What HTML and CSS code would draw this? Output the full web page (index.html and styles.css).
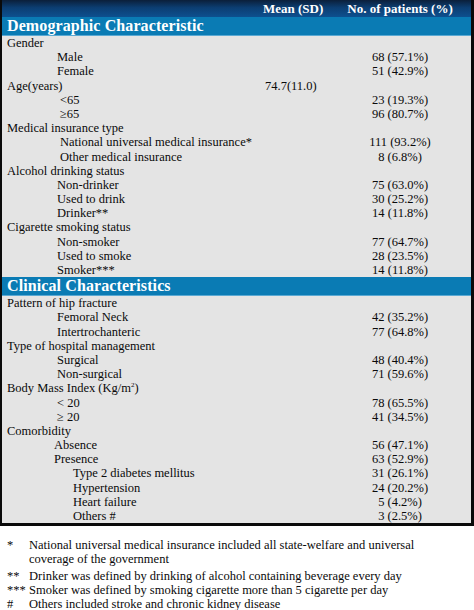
FILE: index.html
```html
<!DOCTYPE html>
<html>
<head>
<meta charset="utf-8">
<link rel="stylesheet" href="styles.css">
</head>
<body>
<div class="table">
  <div class="head">
    <div class="c-label"></div>
    <div class="c-mean">Mean (SD)</div>
    <div class="c-num">No. of patients (%)</div>
  </div>
  <div class="band">Demographic Characteristic</div>
  <div class="body">
    <div class="row"><div class="c-label">Gender</div><div class="c-mean"></div><div class="c-num"></div></div>
    <div class="row"><div class="c-label i1">Male</div><div class="c-mean"></div><div class="c-num">68 (57.1%)</div></div>
    <div class="row"><div class="c-label i1">Female</div><div class="c-mean"></div><div class="c-num">51 (42.9%)</div></div>
    <div class="row"><div class="c-label">Age(years)</div><div class="c-mean">74.7(11.0)</div><div class="c-num"></div></div>
    <div class="row"><div class="c-label i1b">&lt;65</div><div class="c-mean"></div><div class="c-num">23 (19.3%)</div></div>
    <div class="row"><div class="c-label i1b">&ge;65</div><div class="c-mean"></div><div class="c-num">96 (80.7%)</div></div>
    <div class="row"><div class="c-label">Medical insurance type</div><div class="c-mean"></div><div class="c-num"></div></div>
    <div class="row"><div class="c-label i1b">National universal medical insurance*</div><div class="c-mean"></div><div class="c-num">111 (93.2%)</div></div>
    <div class="row"><div class="c-label i1b">Other medical insurance</div><div class="c-mean"></div><div class="c-num">8 (6.8%)</div></div>
    <div class="row"><div class="c-label">Alcohol drinking status</div><div class="c-mean"></div><div class="c-num"></div></div>
    <div class="row"><div class="c-label i1">Non-drinker</div><div class="c-mean"></div><div class="c-num">75 (63.0%)</div></div>
    <div class="row"><div class="c-label i1">Used to drink</div><div class="c-mean"></div><div class="c-num">30 (25.2%)</div></div>
    <div class="row"><div class="c-label i1">Drinker**</div><div class="c-mean"></div><div class="c-num">14 (11.8%)</div></div>
    <div class="row"><div class="c-label">Cigarette smoking status</div><div class="c-mean"></div><div class="c-num"></div></div>
    <div class="row"><div class="c-label i1">Non-smoker</div><div class="c-mean"></div><div class="c-num">77 (64.7%)</div></div>
    <div class="row"><div class="c-label i1">Used to smoke</div><div class="c-mean"></div><div class="c-num">28 (23.5%)</div></div>
    <div class="row"><div class="c-label i1">Smoker***</div><div class="c-mean"></div><div class="c-num">14 (11.8%)</div></div>
  </div>
  <div class="band">Clinical Characteristics</div>
  <div class="body">
    <div class="row"><div class="c-label">Pattern of hip fracture</div><div class="c-mean"></div><div class="c-num"></div></div>
    <div class="row"><div class="c-label i1">Femoral Neck</div><div class="c-mean"></div><div class="c-num">42 (35.2%)</div></div>
    <div class="row"><div class="c-label i1">Intertrochanteric</div><div class="c-mean"></div><div class="c-num">77 (64.8%)</div></div>
    <div class="row"><div class="c-label">Type of hospital management</div><div class="c-mean"></div><div class="c-num"></div></div>
    <div class="row"><div class="c-label i1">Surgical</div><div class="c-mean"></div><div class="c-num">48 (40.4%)</div></div>
    <div class="row"><div class="c-label i1">Non-surgical</div><div class="c-mean"></div><div class="c-num">71 (59.6%)</div></div>
    <div class="row"><div class="c-label">Body Mass Index (Kg/m<sup>2</sup>)</div><div class="c-mean"></div><div class="c-num"></div></div>
    <div class="row"><div class="c-label i1">&lt; 20</div><div class="c-mean"></div><div class="c-num">78 (65.5%)</div></div>
    <div class="row"><div class="c-label i1">&ge; 20</div><div class="c-mean"></div><div class="c-num">41 (34.5%)</div></div>
    <div class="row"><div class="c-label">Comorbidity</div><div class="c-mean"></div><div class="c-num"></div></div>
    <div class="row"><div class="c-label i1a">Absence</div><div class="c-mean"></div><div class="c-num">56 (47.1%)</div></div>
    <div class="row"><div class="c-label i1a">Presence</div><div class="c-mean"></div><div class="c-num">63 (52.9%)</div></div>
    <div class="row"><div class="c-label i2">Type 2 diabetes mellitus</div><div class="c-mean"></div><div class="c-num">31 (26.1%)</div></div>
    <div class="row"><div class="c-label i2">Hypertension</div><div class="c-mean"></div><div class="c-num">24 (20.2%)</div></div>
    <div class="row"><div class="c-label i2">Heart failure</div><div class="c-mean"></div><div class="c-num">5 (4.2%)</div></div>
    <div class="row"><div class="c-label i2">Others #</div><div class="c-mean"></div><div class="c-num">3 (2.5%)</div></div>
  </div>
</div>
<div class="notes">
  <div class="note first"><span class="mark">*</span><span class="txt">National universal medical insurance included all state-welfare and universal coverage of the government</span></div>
  <div class="note"><span class="mark">**</span><span class="txt">Drinker was defined by drinking of alcohol containing beverage every day</span></div>
  <div class="note"><span class="mark">***</span><span class="txt">Smoker was defined by smoking cigarette more than 5 cigarette per day</span></div>
  <div class="note"><span class="mark">#</span><span class="txt">Others included stroke and chronic kidney disease</span></div>
</div>
</body>
</html>
```
FILE: styles.css
```css
html, body {
  margin: 0;
  padding: 0;
  background: #ffffff;
}
body {
  width: 474px;
  font-family: "Liberation Serif", "Times New Roman", serif;
  color: #0a0a0a;
}
.table {
  border-left: 2px solid #0a0a0a;
  border-right: 3px solid #0a0a0a;
  border-bottom: 3px solid #0a0a0a;
  background: #e4e4e4;
}
.head, .row {
  display: grid;
  grid-template-columns: 257px 70px 142px;
}
.head {
  height: 17px;
  line-height: 17px;
  background: linear-gradient(#0b1f3a 0%, #0c3e72 45%, #0d508f 100%);
  color: #ffffff;
  font-weight: bold;
  font-size: 13px;
}
.head .c-mean {
  text-align: left;
  padding-left: 4px;
}
.head .c-num {
  text-align: center;
}
.band {
  height: 18px;
  line-height: 18px;
  background: #0a7bb4;
  border-bottom: 1px solid #5aa9d3;
  color: #ffffff;
  font-weight: bold;
  font-size: 16px;
  padding-left: 5px;
  letter-spacing: 0.1px;
}
.row {
  height: 14.2px;
  line-height: 14.2px;
  font-size: 12.5px;
  white-space: nowrap;
}
.c-label {
  padding-left: 5px;
}
.c-label.i1 { padding-left: 55px; }
.c-label.i1b { padding-left: 58px; }
.c-label.i1a { padding-left: 52px; }
.c-label.i2 { padding-left: 71px; }
.row .c-mean {
  padding-left: 6px;
}
.row .c-num {
  text-align: center;
}
sup {
  font-size: 7px;
  line-height: 0;
  vertical-align: 5px;
}
.notes {
  padding-top: 12px;
  font-size: 12.5px;
  line-height: 14px;
}
.note {
  display: flex;
}
.note.first {
  margin-bottom: 3px;
}
.mark {
  width: 22px;
  padding-left: 7px;
  flex-shrink: 0;
  white-space: nowrap;
}
.txt {
  width: 395px;
}
```
